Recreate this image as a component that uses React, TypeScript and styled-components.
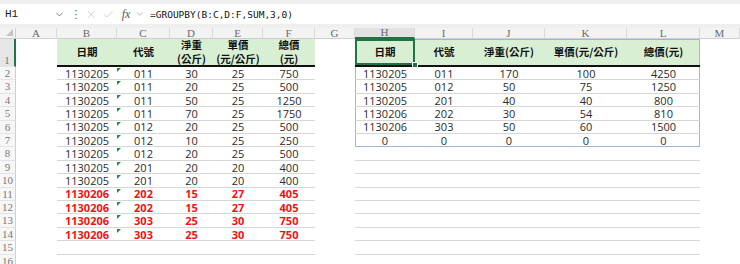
import React from "react";
import styled, { createGlobalStyle } from "styled-components";
import { ChevronDown, X, Check } from "lucide-react";

const GlobalStyle = createGlobalStyle`
  html, body {
    margin: 0;
    padding: 0;
    background: #fff;
  }
  body {
    font-family: "Open Sans", "Noto Sans CJK TC", sans-serif;
    overflow: hidden;
  }
`;

// row header, A..L; M takes the rest
const COL_WIDTHS = [16, 41, 60, 53, 43, 50, 52, 40, 60, 58, 72, 82, 73];
const LETTERS = ["", "A", "B", "C", "D", "E", "F", "G", "H", "I", "J", "K", "L", "M"];
const ROW_H = 13.42;
const ROWS = 16;

type Row = [string, string, number, number, number, boolean?];

const source: Row[] = [
  ["1130205", "011", 30, 25, 750],
  ["1130205", "011", 20, 25, 500],
  ["1130205", "011", 50, 25, 1250],
  ["1130205", "011", 70, 25, 1750],
  ["1130205", "012", 20, 25, 500],
  ["1130205", "012", 10, 25, 250],
  ["1130205", "012", 20, 25, 500],
  ["1130205", "201", 20, 20, 400],
  ["1130205", "201", 20, 20, 400],
  ["1130206", "202", 15, 27, 405, true],
  ["1130206", "202", 15, 27, 405, true],
  ["1130206", "303", 25, 30, 750, true],
  ["1130206", "303", 25, 30, 750, true],
];

const grouped: (string | number)[][] = [
  ["1130205", "011", 170, 100, 4250],
  ["1130205", "012", 50, 75, 1250],
  ["1130205", "201", 40, 40, 800],
  ["1130206", "202", 30, 54, 810],
  ["1130206", "303", 50, 60, 1500],
  [0, 0, 0, 0, 0],
];

const leftHeads = [["日期"], ["代號"], ["淨重", "(公斤)"], ["單價", "(元/公斤)"], ["總價", "(元)"]];
const rightHeads = ["日期", "代號", "淨重(公斤)", "單價(元/公斤)", "總價(元)"];

/* ---------- formula bar ---------- */

const TopBar = styled.div`
  height: 28px;
  box-sizing: border-box;
  padding: 4px 0 4px;
  background: #efefef;
`;

const BarRow = styled.div`
  height: 20px;
  background: #fff;
  display: flex;
  align-items: center;
`;

const NameBox = styled.div`
  width: 70px;
  box-sizing: border-box;
  padding: 0 5px 0 5px;
  display: flex;
  align-items: center;
  justify-content: space-between;
  font-family: "Liberation Mono", monospace;
  font-size: 11px;
  color: #222;
`;

const Dots = styled.div`
  width: 12px;
  text-align: center;
  font-size: 11px;
  color: #666;
  font-family: "DejaVu Sans", sans-serif;
`;

const IconGroup = styled.div`
  width: 60px;
  display: flex;
  align-items: center;
  gap: 5px;
  padding-left: 3px;
  color: #b4b4b4;
`;

const Fx = styled.span`
  font-family: "Liberation Serif", serif;
  font-style: italic;
  font-size: 12px;
  color: #555;
  margin-left: 2px;
`;

const FormulaText = styled.div`
  padding-left: 5px;
  font-family: "DejaVu Sans Mono", monospace;
  font-size: 9.5px;
  color: #111;
  white-space: nowrap;
`;

/* ---------- sheet ---------- */

const Sheet = styled.div`
  display: grid;
  grid-template-columns: ${COL_WIDTHS.map((w) => `${w}px`).join(" ")} 1fr;
  grid-template-rows: 11px 28px repeat(${ROWS - 1}, ${ROW_H}px);
  height: 236px;
  overflow: hidden;
`;

const Corner = styled.div`
  background: #f3f3f3;
  border-right: 1px solid #cfcfcf;
  border-bottom: 1px solid #cfcfcf;
  box-sizing: border-box;
  position: relative;

  &::after {
    content: "";
    position: absolute;
    right: 2px;
    bottom: 2px;
    border-style: solid;
    border-width: 0 0 7px 7px;
    border-color: transparent transparent #c4c4c4 transparent;
  }
`;

const ColHead = styled.div<{ $sel?: boolean }>`
  box-sizing: border-box;
  background: ${(p) => (p.$sel ? "#e2e2e2" : "#f3f3f3")};
  border-right: 1px solid #dadada;
  border-bottom: ${(p) => (p.$sel ? "2px solid #217346" : "1px solid #cfcfcf")};
  display: flex;
  align-items: center;
  justify-content: center;
  font-family: "Liberation Serif", serif;
  font-size: 11px;
  color: #6a6a6a;
  line-height: 1;
`;

const RowHead = styled.div<{ $sel?: boolean }>`
  box-sizing: border-box;
  min-height: 0;
  overflow: hidden;
  background: ${(p) => (p.$sel ? "#e6e6e6" : "#f7f7f7")};
  border-right: ${(p) => (p.$sel ? "2px solid #217346" : "1px solid #cfcfcf")};
  border-bottom: 1px solid #e4e4e4;
  display: flex;
  align-items: flex-end;
  justify-content: center;
  font-family: "Liberation Serif", serif;
  font-size: 11px;
  color: #777;
  line-height: ${ROW_H - 1}px;
`;

type CellProps = {
  $fill?: boolean;
  $bold?: boolean;
  $red?: boolean;
  $line?: "gray" | "black" | "blue";
  $spillL?: boolean;
  $spillR?: boolean;
  $spillT?: boolean;
  $active?: boolean;
  $flag?: boolean;
};

const SPILL = "#9eb5d8";

const shadows = (p: CellProps) => {
  const s: string[] = [];
  if (p.$active) s.push("inset 0 0 0 2px #217346");
  if (p.$spillL) s.push(`inset 1px 0 0 ${SPILL}`);
  if (p.$spillR) s.push(`inset -1px 0 0 ${SPILL}`);
  if (p.$spillT) s.push(`inset 0 1px 0 ${SPILL}`);
  return s.length ? s.join(", ") : "none";
};

const lineColor = { gray: "#d6d6d6", black: "#111", blue: SPILL };

const Cell = styled.div<CellProps>`
  box-sizing: border-box;
  position: relative;
  min-height: 0;
  display: flex;
  align-items: center;
  justify-content: center;
  white-space: nowrap;
  font-size: 11px;
  line-height: 1;
  color: ${(p) => (p.$red ? "#f21212" : "#2b2b2b")};
  font-weight: ${(p) => (p.$bold ? 700 : 400)};
  background: ${(p) => (p.$fill ? "#d9efd3" : "#fff")};
  border-bottom: ${(p) =>
    p.$line ? `${p.$line === "black" ? 2 : 1}px solid ${lineColor[p.$line]}` : "none"};
  box-shadow: ${shadows};

  &::before {
    content: "";
    display: ${(p) => (p.$flag ? "block" : "none")};
    position: absolute;
    left: 0;
    top: 1px;
    border-style: solid;
    border-width: 4px 4px 0 0;
    border-color: #1f8a3b transparent transparent transparent;
  }

  &::after {
    content: "";
    display: ${(p) => (p.$active ? "block" : "none")};
    position: absolute;
    right: -3px;
    bottom: -3px;
    width: 4px;
    height: 4px;
    background: #217346;
    border: 1px solid #fff;
    z-index: 2;
  }
`;

const HeadText = styled.div`
  font-family: "Noto Sans CJK TC", sans-serif;
  font-weight: 700;
  font-size: 10.5px;
  line-height: 14px;
  color: #111;
  text-align: center;
`;

const Blank = styled.div``;

export default function App() {
  const cells: React.ReactNode[] = [];

  LETTERS.forEach((l, i) => {
    if (i === 0) cells.push(<Corner key="corner" />);
    else cells.push(<ColHead key={`ch${l}`} $sel={l === "H"}>{l}</ColHead>);
  });

  for (let r = 1; r <= ROWS; r++) {
    const lined = r <= 15;
    cells.push(
      <RowHead key={`rh${r}`} $sel={r === 1}>
        {r}
      </RowHead>
    );
    cells.push(<Blank key={`a${r}`} />);

    // B..F source table
    for (let c = 0; c < 5; c++) {
      const key = `L${r}-${c}`;
      if (r === 1) {
        cells.push(
          <Cell key={key} $fill $line="black">
            <HeadText>
              {leftHeads[c].map((t) => (
                <div key={t}>{t}</div>
              ))}
            </HeadText>
          </Cell>
        );
      } else {
        const row = source[r - 2];
        cells.push(
          <Cell
            key={key}
            $line={lined ? "gray" : undefined}
            $red={row?.[5]}
            $bold={row?.[5]}
            $flag={!!row && c === 1}
          >
            {row ? row[c] : ""}
          </Cell>
        );
      }
    }

    cells.push(<Blank key={`g${r}`} />);

    // H..L spilled GROUPBY result
    for (let c = 0; c < 5; c++) {
      const key = `R${r}-${c}`;
      const inSpill = r <= 7;
      const edge = {
        $spillL: inSpill && c === 0,
        $spillR: inSpill && c === 4,
        $spillT: r === 1,
      };
      if (r === 1) {
        cells.push(
          <Cell key={key} $fill $line="black" $active={c === 0} {...edge}>
            <HeadText>{rightHeads[c]}</HeadText>
          </Cell>
        );
      } else {
        const row = grouped[r - 2];
        cells.push(
          <Cell key={key} $line={r === 7 ? "blue" : lined ? "gray" : undefined} {...edge}>
            {row ? row[c] : ""}
          </Cell>
        );
      }
    }

    cells.push(<Blank key={`m${r}`} />);
  }

  return (
    <>
      <GlobalStyle />
      <TopBar>
        <BarRow>
          <NameBox>
            H1
            <ChevronDown size={11} color="#444" strokeWidth={1.5} />
          </NameBox>
          <Dots>⋮</Dots>
          <IconGroup>
            <X size={13} strokeWidth={1.2} />
            <Check size={13} strokeWidth={1.2} />
            <Fx>fx</Fx>
            <ChevronDown size={10} color="#888" strokeWidth={1.5} />
          </IconGroup>
          <FormulaText>=GROUPBY(B:C,D:F,SUM,3,0)</FormulaText>
        </BarRow>
      </TopBar>
      <Sheet>{cells}</Sheet>
    </>
  );
}
